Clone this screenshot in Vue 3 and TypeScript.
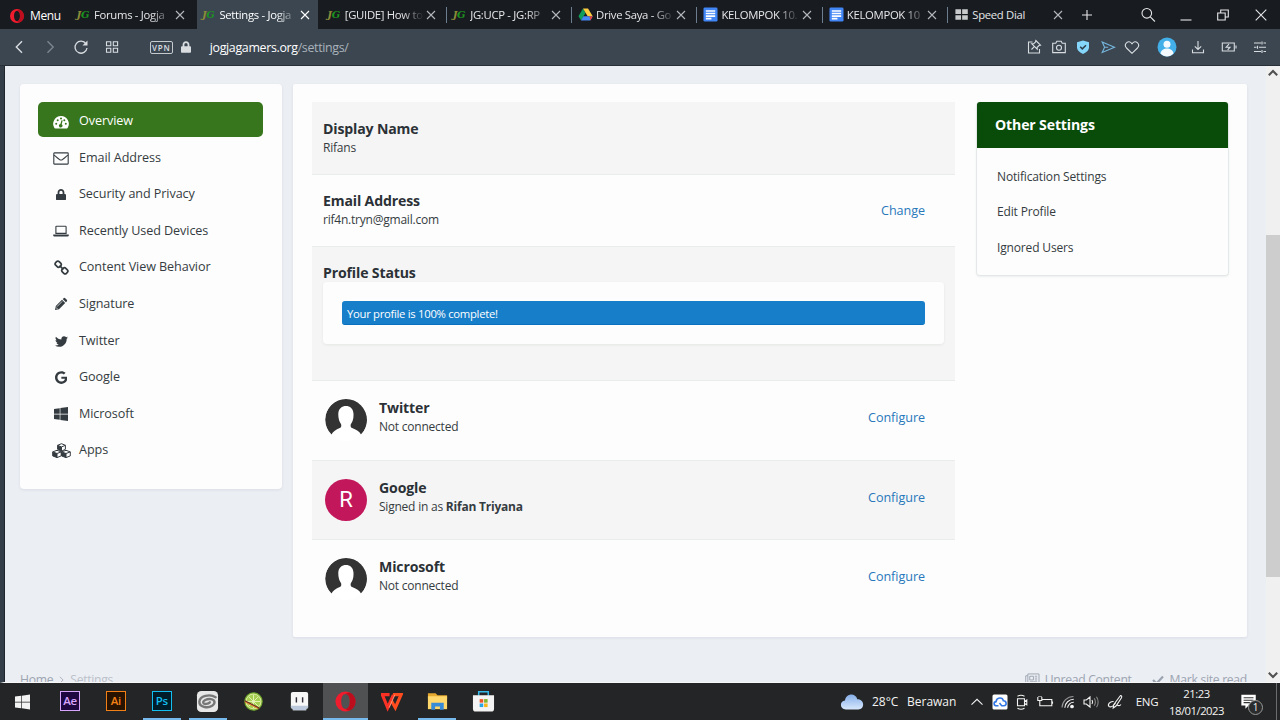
<script setup lang="ts">
type Tab = {
  title: string;
  icon: 'jg' | 'drive' | 'docs' | 'dial';
  active?: boolean;
};

type MenuItem = {
  label: string;
  icon: string;
  viewBox: string;
  width: number;
};

type Account = {
  name: string;
  status: string;
  user?: string;
};

type Tool = {
  icon: string;
  width: number;
};

const tabs: Tab[] = [
  { title: 'Forums - Jogja', icon: 'jg' },
  { title: 'Settings - Jogja', icon: 'jg', active: true },
  { title: '[GUIDE] How to', icon: 'jg' },
  { title: 'JG:UCP - JG:RP', icon: 'jg' },
  { title: 'Drive Saya - Go', icon: 'drive' },
  { title: 'KELOMPOK 10.', icon: 'docs' },
  { title: 'KELOMPOK 10', icon: 'docs' },
  { title: 'Speed Dial', icon: 'dial' },
];

const menu: MenuItem[] = [
  { label: 'Overview', icon: 'gauge', viewBox: '0 0 16 14', width: 16 },
  { label: 'Email Address', icon: 'mail', viewBox: '0 0 16 13', width: 16 },
  { label: 'Security and Privacy', icon: 'lock', viewBox: '0 0 448 512', width: 10 },
  { label: 'Recently Used Devices', icon: 'laptop', viewBox: '0 0 16 12', width: 16 },
  { label: 'Content View Behavior', icon: 'chain', viewBox: '0 0 14 14', width: 15 },
  { label: 'Signature', icon: 'pencil', viewBox: '0 0 14 14', width: 14 },
  { label: 'Twitter', icon: 'twitter', viewBox: '0 0 512 512', width: 13 },
  { label: 'Google', icon: 'google', viewBox: '0 0 488 512', width: 12.5 },
  { label: 'Microsoft', icon: 'windows', viewBox: '0 32 448 448', width: 14 },
  { label: 'Apps', icon: 'cubes', viewBox: '0 0 19 15', width: 19 },
];

const accounts: Account[] = [
  { name: 'Twitter', status: 'Not connected' },
  { name: 'Google', status: 'Signed in as', user: 'Rifan Triyana' },
  { name: 'Microsoft', status: 'Not connected' },
];

const otherSettings = ['Notification Settings', 'Edit Profile', 'Ignored Users'];

const toolbarIcons: Tool[] = [
  { icon: 'pin', width: 24 },
  { icon: 'camera', width: 25 },
  { icon: 'shield', width: 24 },
  { icon: 'send', width: 25 },
  { icon: 'heart', width: 24 },
  { icon: 'user', width: 46 },
  { icon: 'download', width: 16 },
  { icon: 'battery', width: 46 },
  { icon: 'sliders', width: 16 },
];

const windowIcons: Tool[] = [
  { icon: 'search', width: 38 },
  { icon: 'minimize', width: 37 },
  { icon: 'restore', width: 38 },
  { icon: 'close', width: 38 },
];

const apps = [
  { name: 'ae', label: 'Ae' },
  { name: 'ai', label: 'Ai' },
  { name: 'ps', label: 'Ps', open: true },
  { name: 'spiral', open: true },
  { name: 'lime' },
  { name: 'ghost' },
  { name: 'opera', open: true, active: true },
  { name: 'wps' },
  { name: 'folder', open: true },
  { name: 'store' },
];

const trayIcons: Tool[] = [
  { icon: 'chevron', width: 22 },
  { icon: 'cloudSync', width: 23 },
  { icon: 'meet', width: 22 },
  { icon: 'power', width: 23 },
  { icon: 'wifi', width: 24 },
  { icon: 'volume', width: 22 },
  { icon: 'pen', width: 26 },
];

// sidebar glyphs, filled with the current text colour
const glyphs: Record<string, string> = {
  gauge:
    '<path fill="currentColor" fill-rule="evenodd" d="M8 1a7.8 7.8 0 0 1 6.7 11.8q-.3.6-.9.6H2.2q-.6 0-.9-.6A7.8 7.8 0 0 1 8 1zM3.2 7.8a1 1 0 1 0 0 2 1 1 0 0 0 0-2zM4.7 4.2a1 1 0 1 0 0 2 1 1 0 0 0 0-2zM8 2.6a1 1 0 1 0 0 2 1 1 0 0 0 0-2zM11.3 4.2a1 1 0 1 0 0 2 1 1 0 0 0 0-2zM12.8 7.8a1 1 0 1 0 0 2 1 1 0 0 0 0-2zM8.5 5.2L7.4 9a1.7 1.7 0 1 0 1.3.3l1-3.8z"/>',
  mail:
    '<g fill="none" stroke="currentColor" stroke-width="1.1"><rect x=".8" y=".9" width="14.4" height="11.2" rx=".6"/><path d="M1 3.2c2 1.7 4 3 5.3 4.1q1.7 1.4 3.4 0C11 6.2 13 4.9 15 3.2"/></g>',
  lock:
    '<path fill="currentColor" d="M400 224h-24v-72C376 68.2 307.8 0 224 0S72 68.2 72 152v72H48c-26.5 0-48 21.5-48 48v192c0 26.5 21.5 48 48 48h352c26.5 0 48-21.5 48-48V272c0-26.5-21.5-48-48-48zm-104 0H152v-72c0-39.7 32.3-72 72-72s72 32.3 72 72v72z"/>',
  laptop:
    '<path fill="none" stroke="currentColor" stroke-width="1.1" d="M3.5 1.3h9q.6 0 .6.6v6.5H2.9V1.9q0-.6.6-.6z"/><path fill="currentColor" d="M.2 9.6h15.6v1q0 .9-1.3.9h-13q-1.3 0-1.3-.9z"/>',
  chain:
    '<g fill="none" stroke="currentColor" stroke-width="1.6"><rect x="-2.700" y="-2.300" width="5.4" height="4.6" rx="1.7" transform="translate(3.9 3.9) rotate(45)"/><rect x="-2.7" y="-2.3" width="5.4" height="4.6" rx="1.7" transform="translate(10.1 10.1) rotate(45)"/><path d="M5.2 5.3l3.6 3.5"/></g>',
  pencil:
    '<path fill="currentColor" d="M1 13l.8-4L8 2.8 11.200 6 5 12.2zM8.7 2.1l.9-.9q.8-.8 1.6 0l1.6 1.6q.8.8 0 1.6l-.9.9z"/><path stroke="#fff" stroke-width=".7" d="M3 9.6l5.2-5.2M2 10.4l1.6 1.7"/>',
  twitter:
    '<path fill="currentColor" d="M459.37 151.716c.325 4.548.325 9.097.325 13.645 0 138.72-105.583 298.558-298.558 298.558-59.452 0-114.68-17.219-161.137-47.106 8.447.974 16.568 1.299 25.34 1.299 49.055 0 94.213-16.568 130.274-44.832-46.132-.975-84.792-31.188-98.112-72.772 6.498.974 12.995 1.624 19.818 1.624 9.421 0 18.843-1.3 27.614-3.573-48.081-9.747-84.143-51.98-84.143-102.985v-1.299c13.969 7.797 30.214 12.67 47.431 13.319-28.264-18.843-46.781-51.005-46.781-87.391 0-19.492 5.197-37.36 14.294-52.954 51.655 63.675 129.3 105.258 216.365 109.807-1.624-7.797-2.599-15.918-2.599-24.04 0-57.828 46.782-104.934 104.934-104.934 30.213 0 57.502 12.67 76.67 33.137 23.715-4.548 46.456-13.32 66.599-25.34-7.798 24.366-24.366 44.833-46.132 57.827 21.117-2.273 41.584-8.122 60.426-16.243-14.292 20.791-32.161 39.308-52.628 54.253z"/>',
  google:
    '<path fill="currentColor" d="M488 261.8C488 403.3 391.1 504 248 504 110.8 504 0 393.2 0 256S110.8 8 248 8c66.8 0 123 24.5 166.3 64.9l-67.5 64.9C258.5 52.6 94.3 116.6 94.3 256c0 86.5 69.1 156.6 153.7 156.6 98.2 0 135-70.4 140.8-106.9H248v-85.3h236.1c2.3 12.7 3.9 24.9 3.9 41.4z"/>',
  windows:
    '<path fill="currentColor" d="M0 93.7l183.6-25.3v177.4H0V93.7zm0 324.6l183.6 25.3V268.4H0v149.9zm203.8 28L448 480V268.4H203.8v177.9zm0-380.6v180.1H448V32L203.8 65.7z"/>',
  cubes:
    '<g fill="none" stroke="currentColor" stroke-width="1" stroke-linejoin="round"><path d="M9.5.7l3.9 1.6v4L9.5 8.200 5.600 6.300v-4zM5.6 2.3l3.9 1.6 3.9-1.6M9.5 3.9v4.3M5 7.3l4.2 1.6v4L5 14.6.7 12.9v-4zM.7 8.9L5 10.5l4.2-1.6M5 10.5v4.1M14 7.3l4.3 1.6v4L14 14.6l-4.5-1.7v-4zM9.5 8.9l4.5 1.6 4.3-1.6M14 10.5v4.1"/></g><path fill="currentColor" d="M5.6 2.3l3.9 1.6v4.3L5.6 6.3zM.7 8.9L5 10.5v4.1L.7 12.9zM9.5 8.9l4.5 1.6v4.1l-4.5-1.7z"/>',
};

// browser chrome and tray symbols, all on a 20x20 grid
const symbols: Record<string, string> = {
  back: '<path stroke-width="1.4" d="M13 4.3L7.300 10l5.700 5.700"/>',
  forward: '<path stroke="#7c8690" stroke-width="1.4" d="M7.5 4.3L13.200 10l-5.700 5.700"/>',
  reload: '<path stroke-width="1.300" d="M15 6.800A6 6 0 1 0 16 11"/><path fill="currentColor" stroke="none" d="M16.500 3.500v5h-5z"/>',
  grid: '<path d="M4.5 4.8h4.3v4H4.500zM11.300 4.800h4.300v4h-4.300zM4.500 11.200h4.300v4H4.500zM11.300 11.200h4.300v4h-4.300z"/>',
  pin: '<path d="M8.500 5H4.500v11h11v-4M7.500 12.500l2.800-2.800M11.800 3.500l4.700 4.700-1.500.3-1.800 1.800v1.900L7.800 6.800h1.900l1.800-1.800z"/>',
  camera: '<path d="M3.7 6.2h3.1l1-1.9h4.4l1 1.9h3.1v9.4H3.7z"/><circle cx="10" cy="10.700" r="2.500"/>',
  shield: '<path fill="#84d7fa" stroke="none" d="M10 3.500l6 1.800v5.200q0 3.800-6 6.500-6-2.700-6-6.500V5.300z"/><path stroke="#303f4d" stroke-width="1.500" d="M7.200 9.800l2.100 2.100 3.700-3.700"/>',
  send: '<path stroke="#77b7de" d="M4.200 5L16.500 10.200 4.200 15.500l2.400-5.300zM6.600 10.200h3.600"/>',
  heart: '<path d="M10 16.300L4.500 11C1.200 7.300 6.500 1.800 10 6.700c3.500-4.900 8.800.6 5.500 4.300z"/>',
  user: '<circle cx="10" cy="10" r="9.500" fill="#43afe8" stroke="none"/><circle cx="10" cy="7.300" r="3.500" fill="#f4f8ff" stroke="none"/><path fill="#f4f8ff" stroke="none" d="M3.500 16.500c.8-6.600 12.200-6.600 13 0-3.600 3.900-9.400 3.900-13 0z"/>',
  download: '<path d="M10 4v8M6.800 9.300L10 12.500l3.200-3.200M4.500 12.500v3.200h11v-3.200"/>',
  battery: '<path d="M3.300 6h12v8h-12zM17 8.500v3M10 7.200l-2.800 3H11l-2.300 2.600"/>',
  sliders: '<path d="M4 6h7M13.500 6H16M4 10.200h2.500M9 10.200h7M4 14.500h7M13.500 14.500H16M12 4.500v3M7.500 8.700v3M12 13v3"/>',
  search: '<circle cx="8.800" cy="8.300" r="4.800"/><path d="M12.300 11.800l4.600 4.700"/>',
  minimize: '<path d="M4.500 15h11"/>',
  restore: '<path d="M4.700 8h7.500v7H4.700zM7.700 8V5h7.600v7h-3"/>',
  close: '<path d="M4.700 4.700l10.600 10.600M15.300 4.700L4.700 15.300"/>',
  plus: '<path d="M5 10h10M10 5v10"/>',
  chevron: '<path d="M4.500 12.700L10 7.300l5.500 5.400"/>',
  cloudSync: '<rect x="2.500" y="2.500" width="15" height="15" rx="1.500" fill="#fff" stroke="none"/><path stroke="#3478e5" stroke-width="1.600" d="M8.500 13.800H6.700c-3.200 0-3.500-3.800-.6-4.200.4-4.500 6.500-4.800 7.300-.8 3.400 0 3.700 4.700.5 5h-2.200L9.500 11"/>',
  meet: '<path d="M5.500 6.800h7v7h-7zM12.500 9.500l2.300-1.500v4.800l-2.300-1.300M5.500 4.200q3.500-1.800 7 0M5.500 16.300q3.500 1.800 7 0"/>',
  power: '<path d="M7 7.500h9.800v6.300H7M17.500 9.500v2.300M2.800 5v3.500h4V5M4 4v1M6 4v1M4.800 8.500v5.300H8"/>',
  wifi: '<path stroke="#969696" d="M4 15.500A11.500 11.500 0 0 1 15.500 4.500"/><path d="M6.800 15.800a9 9 0 0 1 9-8.500M9.600 15.800a6 6 0 0 1 6.200-5.500"/><circle cx="14" cy="14.500" r="1.300" fill="#fff"/>',
  volume: '<path d="M3 8h2.300L9 5v10l-3.700-3H3zM11 8q1.300 2 0 4"/><path stroke="#888" d="M13.200 6.200q2.400 3.800 0 7.600M15.500 4.700q3.300 5.300 0 10.600"/>',
  pen: '<path d="M15.500 3.500q1.800.3 1 2.200L11 14l-2.800 2 .5-3.300zM8.600 9.500c-3.600-.5-6.500 3.200-4.500 5 1.800 1.300 5-1.200 6.500-3.500M12 13q2.500 1.500 4-.5"/>',
};

const appArt: Record<string, string> = {
  spiral:
    '<rect x="1" y="1" width="22" height="22" rx="4.500" fill="#e7e7e7"/><path fill="none" stroke="#777" stroke-width="2.500" stroke-linecap="round" d="M20.500 7.500C14 3.500 4 6.500 3.500 12.200c-.2 5.500 8.500 7.300 13.300 4.300 3.800-2.500 3.200-6.300-1.300-7-4.200-.6-8.700 1.700-7.800 4 1 2 5.200.8 6.800-.7"/>',
  lime:
    '<circle cx="12" cy="12" r="9.600" fill="#74a92e"/><circle cx="12" cy="12" r="8.300" fill="#dcecA0"/><circle cx="12" cy="12" r="7.200" fill="#a6d052"/><path stroke="#e5f1b5" stroke-width="1" d="M12 5v14M5 12h14M7 7l10 10M17 7L7 17"/><path stroke="#6a3020" stroke-width="1.600" d="M3 11.500l15 7.500"/><path stroke="#ee8a3a" stroke-width="1" d="M3 12.500l14 7"/>',
  ghost:
    '<path fill="#f7f7f7" d="M5 2h14q2 0 2 2v13.500q0 2-2 2v1.500H5v-1.500q-2 0-2-2V4q0-2 2-2z"/><path fill="#bcc9dc" d="M3 16.500h18v2.500h-2v2H5v-2H3z"/><path fill="#302c37" d="M8 7.500h1.500V13H8zM14.500 7.500H16V13h-1.500z"/>',
  opera:
    '<path fill="#ef1c2d" fill-rule="evenodd" d="M12 1.500A10.500 10.500 0 1 0 12 22.500 10.500 10.500 0 1 0 12 1.500zM12 4.300c2.700 0 4.500 3.300 4.500 7.700S14.700 19.700 12 19.700 7.500 16.400 7.500 12 9.300 4.300 12 4.300z"/><path fill="#a80818" d="M12 4.300q3-3 6.400-.6A10.500 10.500 0 0 1 18.400 20.300Q15 22.700 12 19.700c2.700 0 4.500-3.300 4.500-7.700S14.700 4.300 12 4.300z" opacity=".7"/>',
  wps:
    '<path fill="none" stroke="#fa3226" stroke-width="3.300" d="M1 4.800h9M2.500 5l5.500 13.500L14 5"/><path fill="none" stroke="#ff4b1d" stroke-width="3.300" d="M12 11.500l4 7L22 4.800h-8.500"/><path fill="none" stroke="#ffb19a" stroke-width=".8" d="M9.500 18.500L15.500 5"/>',
  folder:
    '<path fill="#e5a92f" d="M2 3.500h8l2 2h10v4H2z"/><path fill="#ffd76b" d="M2 6.500h20V20H2z"/><path fill="#388bd6" d="M5.500 20.500v-7.300h13v7.300h-4v-3.300h-5v3.300z"/>',
  store:
    '<path fill="none" stroke="#36b9e8" stroke-width="1.600" d="M7 6V1.800h10V6"/><path fill="#f3f3f3" d="M1 5.500h22v14q0 3-3 3H4q-3 0-3-3z"/><path fill="#ed542a" d="M8 9.500h3.700v3.700H8z"/><path fill="#7fb52b" d="M12.600 9.500h3.700v3.700h-3.700z"/><path fill="#27a5e5" d="M8 14.100h3.700v3.700H8z"/><path fill="#fab619" d="M12.600 14.100h3.700v3.700h-3.700z"/>',
};
</script>

<template>
  <div class="screen">
    <header class="tab-bar">
      <div class="opera-menu">
        <svg class="opera-mark" viewBox="0 0 24 24" v-html="appArt.opera" />
        <span>Menu</span>
      </div>
      <div v-for="(tab, i) in tabs" :key="i" class="tab" :class="{ active: tab.active, divided: i > 2 }">
        <span v-if="tab.icon === 'jg'" class="fav-jg"><i>J</i>G</span>
        <svg v-else-if="tab.icon === 'drive'" class="fav" viewBox="0 0 16 16">
          <path fill="#109d59" d="M5.3 1.500L8 6.300 3.300 14.500.5 9.800z" />
          <path fill="#ffcd40" d="M5.300 1.500h5.400l5 8.300h-5.400z" />
          <path fill="#4587f4" d="M5.700 9.800h10l-2.500 4.700H3.200z" />
          <path fill="#ea4335" d="M12.200 9.800h3.500l-2.500 4.700z" />
        </svg>
        <svg v-else-if="tab.icon === 'docs'" class="fav" viewBox="0 0 16 16">
          <rect x=".5" y=".5" width="15" height="15" rx="1.500" fill="#4285f4" />
          <path stroke="#fff" stroke-width="1.700" d="M3 4.200h10M3 7h10M3 9.700h10M3 12.400h6" />
        </svg>
        <svg v-else class="fav" viewBox="0 0 16 16">
          <path fill="#c8cacc" d="M1.500 2.500h6v5h-6zM8.700 2.500h6v5h-6zM1.500 8.700h6v5h-6zM8.700 8.700h6v5h-6z" />
        </svg>
        <span class="tab-title" :class="{ plain: tab.icon === 'dial' }">{{ tab.title }}</span>
        <svg class="tab-close" viewBox="0 0 10 10"><path d="M1 1l8 8M9 1L1 9" /></svg>
      </div>
      <div class="new-tab"><svg class="symbol" viewBox="0 0 20 20" v-html="symbols.plus" /></div>
      <div class="window-icons">
        <span v-for="w in windowIcons" :key="w.icon" class="slot" :style="{ width: `${w.width}px` }">
          <svg class="symbol" viewBox="0 0 20 20" v-html="symbols[w.icon]" />
        </span>
      </div>
    </header>

    <div class="toolbar">
      <span v-for="name in ['back', 'forward', 'reload', 'grid']" :key="name" class="slot nav">
        <svg class="symbol" viewBox="0 0 20 20" v-html="symbols[name]" />
      </span>
      <span class="vpn">VPN</span>
      <svg class="secure" viewBox="0 0 448 512" v-html="glyphs.lock" />
      <span class="url"><b>jogjagamers.org</b>/settings/</span>
      <div class="toolbar-icons">
        <span v-for="t in toolbarIcons" :key="t.icon" class="slot" :style="{ width: `${t.width}px` }">
          <svg class="symbol" viewBox="0 0 20 20" v-html="symbols[t.icon]" />
        </span>
      </div>
    </div>

    <div class="viewport">
      <div class="page">
        <div class="columns">
          <nav class="card sidebar">
            <a v-for="(item, i) in menu" :key="item.label" class="menu-item" :class="{ current: i === 0 }">
              <span class="menu-icon">
                <svg :viewBox="item.viewBox" :style="{ width: `${item.width}px` }" v-html="glyphs[item.icon]" />
              </span>
              <span class="menu-label">{{ item.label }}</span>
            </a>
          </nav>

          <main class="card content">
            <section class="rows">
              <div class="row shaded first">
                <div>
                  <h2>Display Name</h2>
                  <p>Rifans</p>
                </div>
              </div>
              <div class="row">
                <div>
                  <h2>Email Address</h2>
                  <p>rif4n.tryn@gmail.com</p>
                </div>
                <a class="action">Change</a>
              </div>
              <div class="row shaded profile">
                <h2>Profile Status</h2>
                <div class="progress-card">
                  <div class="progress">Your profile is 100% complete!</div>
                </div>
              </div>
              <div
                v-for="(account, i) in accounts"
                :key="account.name"
                class="row account"
                :class="{ shaded: i === 1 }"
              >
                <span v-if="account.user" class="avatar letter">R</span>
                <svg v-else class="avatar" viewBox="0 0 42 42">
                  <circle cx="21" cy="21" r="21" fill="#fff" />
                  <path
                    fill="#333"
                    d="M6.500 35.500A21 21 0 1 1 36 35.500Q34 31.500 26.500 28.800q-1.300-1-.7-3.500 3-4 2.700-10.500C28.200 9.500 25 7 21 7s-7.500 2.500-7.700 7.800q-.2 6.500 2.800 10.500.6 2.500-.8 3.500Q8 32 6.500 35.500z"
                  />
                </svg>
                <div>
                  <h2>{{ account.name }}</h2>
                  <p>{{ account.status }} <strong v-if="account.user">{{ account.user }}</strong></p>
                </div>
                <a class="action">Configure</a>
              </div>
            </section>

            <aside class="other">
              <h3>Other Settings</h3>
              <a v-for="link in otherSettings" :key="link">{{ link }}</a>
            </aside>
          </main>
        </div>

        <footer class="crumbs">
          <span>Home</span>
          <svg class="crumb-arrow" viewBox="0 0 6 10"><path d="M1 1l4 4-4 4" /></svg>
          <span class="faint">Settings</span>
          <svg class="news" viewBox="0 0 16 14">
            <path d="M3 1h12v11H2Q.7 12 .7 10.500V3H3zM3 3v8M5 3.500h4v4H5zM10.500 3.500H13M10.500 5.500H13M10.500 7.500H13M5 9.500h8" />
          </svg>
          <span>Unread Content</span>
          <svg class="tick" viewBox="0 0 12 10"><path d="M1 5l3.500 3.500L11 1.500" /></svg>
          <span>Mark site read</span>
        </footer>
      </div>
      <div class="scrollbar">
        <svg viewBox="0 0 10 8"><path d="M2 6l3-3 3 3" /></svg>
        <div class="thumb"></div>
        <svg viewBox="0 0 10 8"><path d="M2 2l3 3 3-3" /></svg>
      </div>
    </div>

    <div class="taskbar">
      <div class="start">
        <svg viewBox="0 32 448 448" v-html="glyphs.windows" />
      </div>
      <div v-for="app in apps" :key="app.name" class="app" :class="{ open: app.open, active: app.active }">
        <span v-if="app.label" class="adobe" :class="app.name">{{ app.label }}</span>
        <svg v-else viewBox="0 0 24 24" v-html="appArt[app.name]" />
      </div>

      <div class="tray">
        <svg class="weather" viewBox="0 0 24 18">
          <defs>
            <linearGradient id="cloud" x1="0" y1="0" x2="0" y2="1">
              <stop offset="0" stop-color="#86aee8" />
              <stop offset="1" stop-color="#d7e8fd" />
            </linearGradient>
          </defs>
          <path
            fill="url(#cloud)"
            d="M6 16.500C-.5 16.500-.7 8 5 7.500 6 .2 15.500-.5 17.300 6.200c7.500-.2 7.700 10 1 10.300z"
          />
        </svg>
        <span class="temp">28°C</span>
        <span class="sky">Berawan</span>
        <span v-for="t in trayIcons" :key="t.icon" class="slot" :style="{ width: `${t.width}px` }">
          <svg class="symbol" viewBox="0 0 20 20" v-html="symbols[t.icon]" />
        </span>
        <span class="lang">ENG</span>
        <span class="clock"><span>21:23</span><span>18/01/2023</span></span>
        <span class="notice">
          <svg viewBox="0 0 20 20">
            <path fill="#fff" d="M1.500 2h16v12H9.500l-3.500 3.500V14H1.500z" />
            <path stroke="#333" stroke-width="1.200" d="M4 5.300h11M4 8h11M4 10.700h7" />
          </svg>
          <span class="badge">1</span>
        </span>
        <span class="show-desktop"></span>
      </div>
    </div>
  </div>
</template>

<style>
body {
  margin: 0;
  overflow: hidden;
}
</style>

<style scoped>
.screen {
  width: 1280px;
  height: 720px;
  display: flex;
  flex-direction: column;
  overflow: hidden;
  font-family: 'Open Sans', 'Noto Sans', sans-serif;
  color: #353c41;
  background: #ebeef3;
}

.screen svg {
  flex: none;
  display: block;
}

.slot {
  display: flex;
  align-items: center;
  justify-content: center;
  flex: none;
}

.symbol {
  width: 20px;
  height: 20px;
  fill: none;
  stroke: currentColor;
  stroke-width: 1.1;
}

/* tabs */
.tab-bar {
  height: 29px;
  flex: none;
  display: flex;
  background: #181b20;
  color: #e5e6e8;
}

.opera-menu {
  width: 71.5px;
  flex: none;
  box-sizing: border-box;
  padding: 2px 0 0 9px;
  display: flex;
  align-items: center;
  font-size: 12px;
  letter-spacing: -0.4px;
  color: #fff;
}

.opera-mark {
  width: 16px;
  height: 16px;
  margin-right: 5px;
}

.tab {
  width: 125.4px;
  flex: none;
  box-sizing: border-box;
  padding: 0 6px 0 5px;
  display: flex;
  align-items: center;
  position: relative;
  font-size: 11.3px;
}

.tab.active {
  width: 121.4px;
  margin-right: 4px;
  padding-right: 2px;
  background: #3b4651;
  color: #fff;
}

.tab.divided::before {
  content: '';
  position: absolute;
  left: -2px;
  top: 7px;
  width: 1px;
  height: 16px;
  background: #6b7d8e;
}

.fav-jg {
  width: 17.5px;
  flex: none;
  font: italic 700 10px 'DejaVu Serif', serif;
  letter-spacing: -0.3px;
  color: #1c931e;
}

.fav-jg i {
  color: #8a8b3a;
}

.fav {
  width: 15px;
  height: 15px;
  margin: 0 3px 0 0;
}

.tab-title {
  width: 79px;
  overflow: hidden;
  white-space: nowrap;
  letter-spacing: -0.3px;
  -webkit-mask-image: linear-gradient(90deg, #000 72%, transparent 100%);
  mask-image: linear-gradient(90deg, #000 72%, transparent 100%);
}

.tab-title.plain {
  -webkit-mask-image: none;
  mask-image: none;
}

.tab-close {
  width: 10px;
  height: 10px;
  margin-left: auto;
  margin-right: 6px;
  stroke: #b5b8bb;
  stroke-width: 1.1;
}

.tab.active .tab-close {
  stroke: #fff;
}

.new-tab {
  width: 25px;
  display: flex;
  align-items: center;
  justify-content: center;
}

.window-icons {
  margin-left: auto;
  display: flex;
}

/* address bar */
.toolbar {
  height: 37px;
  flex: none;
  box-sizing: border-box;
  padding-left: 3px;
  display: flex;
  align-items: center;
  background: #3b4651;
  border-bottom: 1px solid #292f37;
  color: #d9dde0;
}

.nav {
  width: 31.2px;
}

.vpn {
  width: 23px;
  height: 13px;
  margin-left: 22px;
  box-sizing: border-box;
  border: 1px solid #c5cacf;
  border-radius: 2px;
  font-size: 8px;
  font-weight: 600;
  letter-spacing: 0.7px;
  line-height: 11px;
  text-align: center;
}

.secure {
  width: 10px;
  height: 12px;
  margin-left: 8px;
}

.url {
  margin-left: 19px;
  font-size: 12.4px;
  letter-spacing: -0.33px;
  color: #aab3bb;
}

.url b {
  font-weight: 400;
  color: #fff;
}

.toolbar-icons {
  margin-left: auto;
  margin-right: 12px;
  display: flex;
}

/* page */
.viewport {
  height: 617px;
  flex: none;
  display: flex;
  overflow: hidden;
  box-sizing: border-box;
  border-left: 4px solid #333e49;
  border-bottom: 1px solid #f7f7f7;
  box-shadow: inset 1px 0 #20262c;
}

.page {
  flex: 1;
  padding: 18px 0 0 16px;
}

.columns {
  display: flex;
  align-items: flex-start;
  gap: 11px;
}

.card {
  box-sizing: border-box;
  background: #fdfdfd;
  border-radius: 4px;
  box-shadow: 0 1px 3px rgba(40, 60, 80, 0.09);
}

.sidebar {
  width: 262px;
  height: 405px;
  padding: 18px 19px 18px 18px;
  display: flex;
  flex-direction: column;
  gap: 1.6px;
}

.menu-item {
  height: 35px;
  flex: none;
  box-sizing: border-box;
  padding-left: 10px;
  display: flex;
  align-items: center;
  border-radius: 5px;
  font-size: 12.6px;
  letter-spacing: -0.08px;
}

.menu-item.current {
  background: #37761c;
  color: #fff;
}

.menu-icon {
  width: 26px;
  margin-right: 5px;
  padding-top: 4px;
  display: flex;
  justify-content: center;
}

.menu-label {
  padding-top: 2px;
}

.content {
  width: 954px;
  height: 553px;
  padding: 18px 18px 0 19px;
  display: flex;
  align-items: flex-start;
  justify-content: space-between;
  border-radius: 2px;
}

.rows {
  width: 643px;
}

.row {
  height: 72px;
  box-sizing: border-box;
  padding: 17px 30px 0 11px;
  display: flex;
  border-bottom: 1px solid #eaebeb;
}

.row.first {
  height: 73px;
}

.row.first + .row {
  padding-top: 16px;
}

.row.shaded {
  background: #f5f5f5;
}

.row h2 {
  margin: 0;
  font-size: 14.1px;
  font-weight: 700;
  line-height: 19px;
  letter-spacing: -0.15px;
  color: #2b3136;
}

.row p {
  margin: 0;
  font-size: 12px;
  line-height: 20px;
  letter-spacing: -0.22px;
}

.action {
  margin: 11px 0 0 auto;
  font-size: 12.6px;
  line-height: 18px;
  letter-spacing: -0.05px;
  color: #2878bb;
}

.profile {
  height: 134px;
  padding-top: 16px;
  padding-right: 11px;
  flex-direction: column;
}

.progress-card {
  height: 62px;
  box-sizing: border-box;
  padding: 19px;
  background: #fdfdfd;
  border-radius: 4px;
  box-shadow: 0 1px 3px rgba(40, 70, 40, 0.08);
}

.progress {
  height: 24px;
  box-sizing: border-box;
  padding-left: 5px;
  border-radius: 3px;
  background: #177ec9;
  border-bottom: 1px solid #0870bd;
  color: #fff;
  font-size: 11.3px;
  line-height: 25px;
  letter-spacing: -0.3px;
}

.account {
  height: 79.7px;
  padding: 17px 30px 0 13px;
}

.account:last-child {
  border-bottom: 0;
}

.avatar {
  width: 42px;
  height: 42px;
  margin: 1px 12px 0 0;
  border-radius: 50%;
}

.letter {
  background: #c2185b;
  color: #fff;
  font: 22px/42px Roboto, sans-serif;
  text-align: center;
}

.other {
  width: 253px;
  height: 174px;
  box-sizing: border-box;
  display: flex;
  flex-direction: column;
  border: 1px solid #e4e8e9;
  border-top: 0;
  border-radius: 4px;
  box-shadow: 0 1px 2px rgba(40, 60, 80, 0.08);
}

.other h3 {
  margin: 0 0 11px;
  padding-left: 18px;
  border-radius: 3px 3px 0 0;
  background: #094b09;
  color: #fff;
  font-size: 14.1px;
  font-weight: 700;
  line-height: 46px;
  letter-spacing: -0.15px;
}

.other a {
  padding-left: 20px;
  font-size: 12px;
  line-height: 35.3px;
  letter-spacing: -0.15px;
}

.crumbs {
  margin-top: 33px;
  padding-right: 19px;
  display: flex;
  align-items: center;
  font-size: 12.2px;
  line-height: 19px;
  letter-spacing: -0.3px;
  color: #9ca4b1;
}

.crumbs svg {
  fill: none;
  stroke: currentColor;
}

.crumb-arrow {
  width: 5px;
  height: 8px;
  margin: 0 6px;
}

.faint {
  color: #bbc1ca;
}

.news {
  width: 15px;
  height: 13px;
  margin: 0 5px 0 auto;
}

.tick {
  width: 12px;
  height: 10px;
  margin: 0 6px 0 20px;
  stroke-width: 2.2;
}

.scrollbar {
  width: 14px;
  flex: none;
  display: flex;
  flex-direction: column;
  background: #f0f0f0;
}

.scrollbar svg {
  width: 14px;
  height: 13px;
  fill: none;
  stroke: #505050;
  stroke-width: 1.5;
}

.thumb {
  height: 342px;
  margin: auto 0 92px;
  background: #cdcdcd;
}

/* taskbar */
.taskbar {
  height: 37px;
  flex: none;
  display: flex;
  background: #242526;
  color: #f3f3f3;
}

.start {
  width: 47px;
  display: flex;
  align-items: center;
  justify-content: center;
  box-sizing: border-box;
  padding-right: 2px;
}

.start svg {
  width: 15px;
  height: 16px;
}

.app {
  width: 45.93px;
  position: relative;
  display: flex;
  align-items: center;
  justify-content: center;
}

.app svg {
  width: 23px;
  height: 23px;
}

.app.active {
  background: #505152;
}

.app.open::after {
  content: '';
  position: absolute;
  left: 4px;
  right: 4px;
  bottom: 0;
  height: 2px;
  background: #76b9ed;
}

.app.active::after {
  left: 0;
  right: 0;
}

.adobe {
  width: 20px;
  height: 20px;
  margin-bottom: 2px;
  box-sizing: border-box;
  border: 1.5px solid;
  font-size: 11.5px;
  font-weight: 600;
  line-height: 18px;
  letter-spacing: -0.4px;
  text-align: center;
}

.ae {
  background: #1f0740;
  color: #d7a5fc;
}

.ai {
  background: #271300;
  color: #f38017;
}

.ps {
  background: #001d29;
  color: #13bef0;
}

.tray {
  margin-left: auto;
  width: 440px;
  display: flex;
  align-items: center;
  font-size: 12px;
}

.weather {
  width: 24px;
  height: 18px;
}

.temp {
  width: 35px;
  margin-left: 8px;
}

.sky {
  width: 59px;
}

.lang {
  width: 38px;
  text-align: center;
  font-size: 11.5px;
  letter-spacing: -0.3px;
}

.clock {
  width: 61px;
  display: flex;
  flex-direction: column;
  align-items: center;
  font-size: 11.3px;
  line-height: 17px;
  letter-spacing: -0.5px;
}

.notice {
  position: relative;
  margin-left: 13px;
}

.notice svg {
  width: 18px;
  height: 18px;
}

.badge {
  position: absolute;
  left: 8px;
  top: 7px;
  width: 13px;
  height: 13px;
  border: 1px solid #999;
  border-radius: 50%;
  background: #2b2c2d;
  font-size: 10px;
  line-height: 13px;
  text-align: center;
}

.show-desktop {
  width: 1px;
  height: 37px;
  margin-left: auto;
  margin-right: 3px;
  background: #6b6c6d;
}
</style>
